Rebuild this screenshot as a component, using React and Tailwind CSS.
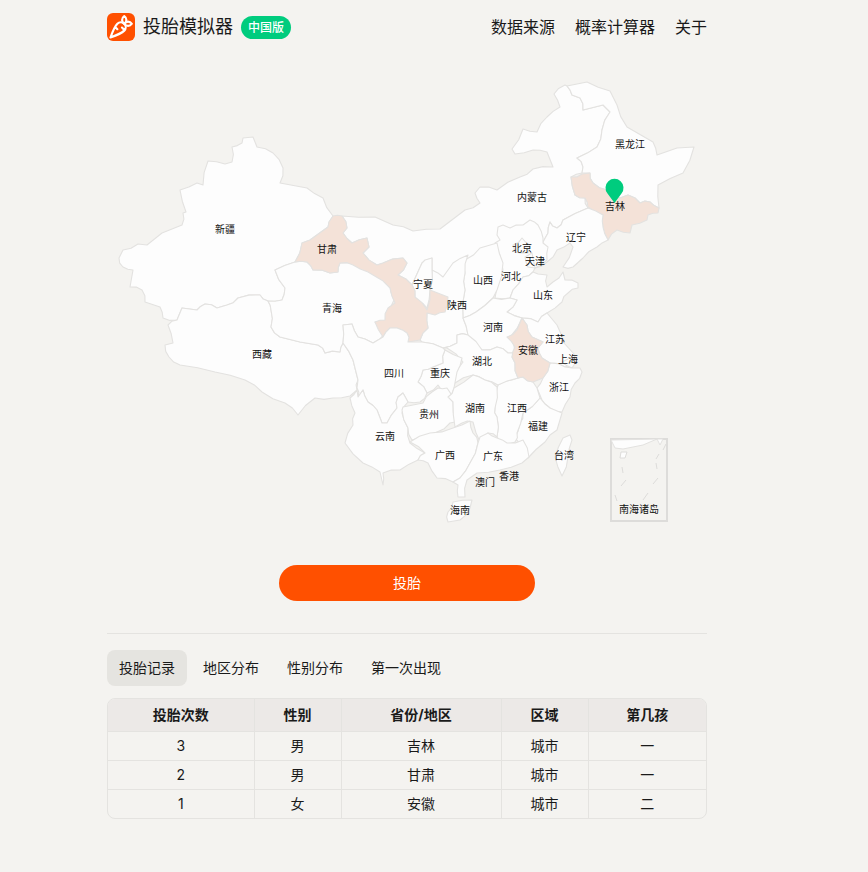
import React from 'react';
import { Carrot } from 'lucide-react';

const PINK = '#f4e2d8';
const WHITE = '#fdfdfd';

// drawn in order, later ones sit on top of earlier ones. coordinates are page pixels
const provinces = [
  { name: '新疆', d: '243,138 253,137 257,147 273,153 283,168 280,183 307,188 323,198 333,216 329,222 328,227 310,240 302,243 295,262 275,270 285,288 282,300 268,301 260,295 238,298 227,305 217,308 205,304 197,310 182,308 177,320 163,318 160,307 145,302 142,290 130,287 133,270 123,267 119,258 123,250 138,244 147,245 162,233 182,225 183,213 186,212 180,190 197,183 203,185 208,161 225,164 232,162 232,147 242,143' },
  { name: '西藏', d: '177,320 182,308 197,310 205,304 217,308 227,305 238,298 260,295 268,301 271,310 271,327 280,337 300,342 318,345 325,353 340,352 343,343 353,360 358,380 357,390 350,396 333,398 315,398 298,415 285,403 262,392 245,380 215,372 180,365 169,357 165,345 173,343 168,325' },
  { name: '青海', d: '295,262 307,262 313,270 330,273 338,272 340,263 357,263 368,267 377,273 390,282 394,300 387,315 385,323 375,322 385,333 373,343 365,339 358,337 352,324 343,325 343,343 340,352 325,353 318,345 300,342 280,337 271,327 271,310 268,301 282,300 285,288 275,270' },
  { name: '内蒙古', d: '342,216 375,217 393,225 413,231 440,229 465,210 480,203 475,193 480,187 497,190 520,177 533,169 553,167 547,152 533,150 515,154 512,149 523,129 537,132 547,117 560,107 554,94 565,85 567,86 572,95 580,98 583,110 603,105 610,112 602,130 597,147 577,158 583,167 582,173 571,177 575,195 585,198 588,208 563,220 557,228 550,222 548,233 543,242 503,263 480,290 445,285 432,270 432,258 422,263 412,285 398,275 407,263 403,258 383,263 377,265 363,253 369,247 367,238 352,243 343,233 347,228' },
  { name: '黑龙江', d: '567,86 572,95 580,98 583,110 603,105 610,112 602,130 597,147 577,158 583,167 582,173 590,173 593,183 607,190 620,198 628,195 635,198 640,203 650,202 659,208 658,185 683,173 694,147 677,148 657,155 653,142 627,127 617,105 610,91 587,82' },
  { name: '吉林', fill: PINK, d: '571,177 582,174 590,173 593,183 607,190 620,198 628,195 635,198 640,203 650,202 659,208 658,213 648,215 647,220 632,225 630,233 617,230 608,240 603,227 603,215 588,207 585,198 575,195' },
  { name: '辽宁', d: '588,208 603,215 603,227 608,240 597,247 583,258 573,267 563,267 573,247 570,243 557,250 547,262 535,268 543,243 543,242 548,233 550,222 557,228 563,220' },
  { name: '河北', d: '498,227 503,225 510,228 523,225 530,220 538,225 543,238 543,243 548,247 547,260 535,268 533,272 523,277 513,290 510,298 495,298 503,270 495,243 500,240 497,235' },
  { name: '北京', d: '513,245 522,238 530,245 528,253 520,253 515,252' },
  { name: '天津', d: '525,257 532,253 535,268 528,267 526,262' },
  { name: '山西', d: '465,260 480,248 497,243 503,263 497,290 493,298 476,312 463,318 465,290 465,273' },
  { name: '陕西', d: '432,270 443,277 453,263 468,255 465,273 465,290 463,318 468,335 457,335 457,343 443,348 422,342 420,340 428,328 427,313 427,308 430,290' },
  { name: '宁夏', d: '412,285 422,263 425,260 432,258 432,270 430,290 427,308 418,302 415,297' },
  { name: '甘肃', fill: PINK, d: '333,216 342,216 347,228 343,233 352,243 367,238 369,247 363,253 377,265 383,263 403,258 407,263 398,275 412,285 415,297 427,310 430,290 448,297 445,312 435,315 427,313 428,328 420,340 408,342 407,333 397,328 390,328 383,337 375,322 385,320 388,308 395,303 390,288 373,275 368,272 353,265 340,263 338,272 330,273 313,270 307,262 295,262 302,243 310,240 328,227 329,222' },
  { name: '山东', d: '533,272 538,274 547,275 547,287 553,282 563,272 565,280 578,283 578,288 568,293 562,302 547,313 538,322 522,318 507,312 517,300 510,298 513,290 523,277' },
  { name: '河南', d: '463,318 476,312 493,298 510,298 517,300 507,312 522,318 510,337 515,353 508,353 497,347 482,350 470,338 468,335' },
  { name: '江苏', d: '522,318 538,322 547,313 557,325 563,342 575,355 573,362 565,367 550,363 542,358 538,348 543,342 532,337 527,325' },
  { name: '上海', d: '562,362 570,358 576,362 572,368' },
  { name: '浙江', d: '550,363 565,367 572,368 580,368 582,372 575,383 570,397 562,412 550,408 542,400 537,388 543,378' },
  { name: '福建', d: '540,398 550,408 562,413 557,430 545,442 528,458 523,443 515,438 520,423 523,413' },
  { name: '江西', d: '498,385 512,380 518,378 523,377 533,382 537,388 540,398 523,413 517,433 515,442 507,445 497,437 497,417 495,408' },
  { name: '湖北', d: '443,348 457,343 457,335 468,335 482,350 497,347 508,353 515,353 512,357 515,363 518,378 498,385 485,380 473,375 455,383 452,377 463,362 447,348' },
  { name: '安徽', fill: PINK, d: '522,318 527,325 532,337 543,342 538,348 542,358 550,363 543,378 533,382 523,377 518,378 515,363 512,357 515,347 507,337 517,330' },
  { name: '重庆', d: '445,350 462,358 457,372 454,388 448,397 438,385 427,393 418,382 423,370 433,367 443,363' },
  { name: '四川', d: '343,325 352,324 358,337 365,339 373,343 383,337 390,328 397,328 407,333 408,342 422,342 443,348 445,350 443,363 433,367 423,370 418,382 427,393 420,402 408,402 403,393 398,397 397,408 387,423 382,423 377,410 368,402 363,390 358,397 357,388 358,380 353,360 343,343' },
  { name: '云南', d: '350,398 357,390 358,397 363,390 368,402 377,410 382,423 387,423 397,408 398,397 403,393 408,402 402,413 408,428 410,443 425,453 418,460 400,470 383,473 383,485 380,472 363,463 345,443 353,425 355,413' },
  { name: '贵州', d: '402,410 403,407 423,403 432,392 438,388 447,388 453,402 455,422 450,423 437,432 423,440 412,440 408,428' },
  { name: '湖南', d: '454,388 473,375 485,380 497,387 495,408 497,417 497,437 488,433 480,442 473,422 462,423 455,427 453,402 448,397' },
  { name: '广西', d: '410,442 430,433 453,428 470,421 473,433 478,443 470,463 460,478 453,482 437,478 428,463 418,460 425,453' },
  { name: '广东', d: '480,437 488,433 497,438 507,443 523,440 529,457 522,463 500,470 477,473 467,480 465,497 458,497 458,485 453,482 460,478 470,463 478,443' },
  { name: '海南', d: '448,512 453,502 472,500 470,508 460,520 448,522' },
  { name: '台湾', d: '570,435 563,438 555,457 562,476 568,457 572,440' },
];

const labels = [
  ['黑龙江', 630, 144], ['内蒙古', 532, 197], ['吉林', 615, 206], ['辽宁', 576, 237], ['北京', 522, 248],
  ['天津', 535, 261], ['河北', 511, 276], ['山西', 483, 280], ['宁夏', 423, 284], ['陕西', 457, 305],
  ['山东', 543, 295], ['河南', 493, 327], ['江苏', 555, 339], ['安徽', 528, 350], ['上海', 568, 359],
  ['湖北', 482, 361], ['四川', 394, 373], ['重庆', 440, 373], ['浙江', 559, 387], ['湖南', 475, 408],
  ['江西', 517, 408], ['贵州', 429, 414], ['福建', 538, 426], ['云南', 385, 436], ['广西', 445, 455],
  ['广东', 493, 456], ['台湾', 564, 455], ['香港', 509, 476], ['澳门', 485, 482], ['海南', 460, 510],
  ['南海诸岛', 639, 509], ['新疆', 225, 229], ['甘肃', 327, 249], ['青海', 332, 308], ['西藏', 262, 354],
];

const records = [
  { n: 3, sex: '男', place: '吉林', area: '城市', child: '一' },
  { n: 2, sex: '男', place: '甘肃', area: '城市', child: '一' },
  { n: 1, sex: '女', place: '安徽', area: '城市', child: '二' },
];

// the real borders wiggle. long edges get a midpoint pushed sideways, the push comes
// from the two end points so that neighbours sharing an edge get the same wiggle
function roughen(d) {
  const pts = d.split(' ').map(p => p.split(',').map(Number));
  const out = [];
  pts.forEach((a, i) => {
    const b = pts[(i + 1) % pts.length];
    out.push(a.join(','));
    const len = Math.hypot(b[0] - a[0], b[1] - a[1]);
    if (len < 9) return;
    const seed = (a[0] + b[0]) * 7 + (a[1] + b[1]) * 13;
    const push = ((seed % 5) - 2) * 0.7;
    // the normal has to point the same way whichever way round the edge is walked
    const flip = a[0] < b[0] || (a[0] === b[0] && a[1] < b[1]) ? 1 : -1;
    const mx = (a[0] + b[0]) / 2 + (-(b[1] - a[1]) / len) * push * flip;
    const my = (a[1] + b[1]) / 2 + ((b[0] - a[0]) / len) * push * flip;
    out.push(`${mx.toFixed(1)},${my.toFixed(1)}`);
  });
  return out.join(' ');
}

const ChinaMap = () => (
  <svg className="block" width="600" height="490" viewBox="107 55 600 490">
    {provinces.map(p => (
      <polygon
        key={p.name}
        points={roughen(p.d)}
        fill={p.fill || WHITE}
        stroke="#e3e2e0"
        strokeWidth="1.1"
        strokeLinejoin="round"
      />
    ))}
    {/* south china sea inset */}
    <rect x="611" y="439" width="56" height="82" fill="#f4f3f0" stroke="#dddcda" strokeWidth="2" />
    <polygon points="611,440 657,439 643,445 623,449 615,448" fill={WHITE} stroke="#e3e2e0" />
    <polygon points="657,439 663,439 660,445" fill={WHITE} stroke="#e3e2e0" />
    <polygon points="621,452 627,452 625,458 620,458" fill={WHITE} stroke="#dddcda" />
    <g stroke="#dddcda" strokeWidth="1" fill="none">
      <path d="M622 467l1 6M626 480l-5 6M615 495l2 6M648 493l-5 7M658 478l-5 6M656 463l1 6M659 454l-3 5M666 444l-3 6" />
    </g>
    {labels.map(([text, x, y]) => (
      <text
        key={text}
        x={x}
        y={y}
        textAnchor="middle"
        dominantBaseline="central"
        className="text-[10px] fill-[#111111]"
      >
        {text}
      </text>
    ))}
    <path d="M614.500 203l-7-9.500a9 9 0 1 1 14 0z" fill="#00cc7e" />
  </svg>
);

export default function App() {
  return (
    <div className="min-h-[872px] bg-[#f4f3f0] text-[#1a1a1a] font-['Inter','Noto_Sans_CJK_SC',sans-serif]">
      <div className="ml-[107px] w-[600px]">
        <header className="flex h-[55px] items-start justify-between pt-[13px]">
          <div className="flex items-center">
            <div className="flex h-7 w-7 items-center justify-center rounded-md bg-[#ff5000]">
              <Carrot size={26} color="#ffffff" strokeWidth={2} />
            </div>
            <span className="ml-2 text-lg leading-7">投胎模拟器</span>
            <span className="ml-2 rounded-full bg-[#00cc7e] px-[7px] py-[3px] text-xs leading-[17px] font-medium text-white">中国版</span>
          </div>
          <nav className="flex gap-5 text-base leading-7">
            <a>数据来源</a>
            <a>概率计算器</a>
            <a>关于</a>
          </nav>
        </header>

        <ChinaMap />

        <div className="mt-5 flex justify-center">
          <button className="h-9 w-64 rounded-full bg-[#ff5000] text-sm text-white">投胎</button>
        </div>

        <div className="mt-8 border-t border-[#e4e3e0]" />

        <div className="mt-4 flex gap-1 text-sm">
          <button className="h-9 rounded-lg bg-[#e5e4e0] px-3">投胎记录</button>
          <button className="h-9 rounded-lg px-3">地区分布</button>
          <button className="h-9 rounded-lg px-3">性别分布</button>
          <button className="h-9 rounded-lg px-3">第一次出现</button>
        </div>

        <div className="mt-3 overflow-hidden rounded-lg border border-[#e4e3e0]">
          <table className="w-full table-fixed border-collapse text-center text-sm">
            <thead>
              <tr className="h-[32px] bg-[#ece9e7] font-bold">
                <th className="w-[146px] border-r border-[#e4e3e0]">投胎次数</th>
                <th className="w-[87px] border-r border-[#e4e3e0]">性别</th>
                <th className="w-[160px] border-r border-[#e4e3e0]">省份/地区</th>
                <th className="w-[87px] border-r border-[#e4e3e0]">区域</th>
                <th>第几孩</th>
              </tr>
            </thead>
            <tbody>
              {records.map(r => (
                <tr key={r.n} className="h-[29px] border-t border-[#e4e3e0]">
                  <td className="border-r border-[#e4e3e0]">{r.n}</td>
                  <td className="border-r border-[#e4e3e0]">{r.sex}</td>
                  <td className="border-r border-[#e4e3e0]">{r.place}</td>
                  <td className="border-r border-[#e4e3e0]">{r.area}</td>
                  <td>{r.child}</td>
                </tr>
              ))}
            </tbody>
          </table>
        </div>
      </div>
    </div>
  );
}
